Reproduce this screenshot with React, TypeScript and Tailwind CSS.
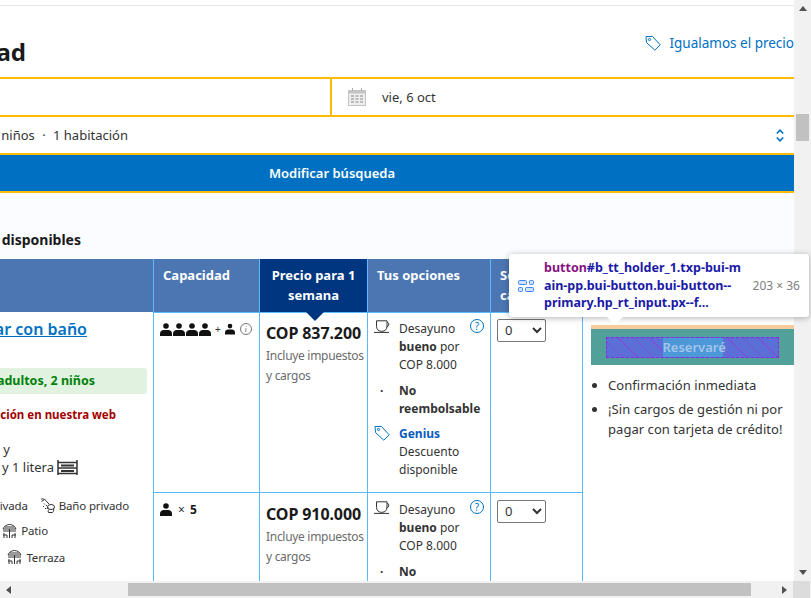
import React, { FC } from 'react';

const Person: FC<{ className?: string }> = ({ className = 'w-[12px] h-[13px]' }) => (
  <svg viewBox="0 0 12 13" className={className} fill="#111">
    <circle cx="6" cy="3" r="2.8" />
    <path d="M0 13V10.5C0 8.2 2 7 3.5 7h5C10 7 12 8.2 12 10.5V13z" />
  </svg>
);

const Cup = () => (
  <svg viewBox="0 0 16 13" className="w-[16px] h-[13px] shrink-0" fill="none" stroke="#333" strokeWidth="1">
    <path d="M2.5 .8h10.5v5.5c0 3-2 5-5 5H7.500c-3 0-5-2-5-5z" />
    <path d="M13 2.500c2.500-.500 2.500 4-.500 4.500" />
    <path d="M0 12.400h15" />
  </svg>
);

const TagIcon: FC<{ className?: string; color?: string }> = ({ className = 'w-[16px] h-[16px]', color = '#0071c2' }) => (
  <svg viewBox="0 0 16 16" className={className} fill="none" stroke={color} strokeWidth="1">
    <path d="M1 1.500 7.500 1.500 15.200 9.800 9.800 15.200 1.500 7.500z" strokeLinejoin="round" />
    <circle cx="4.500" cy="4.500" r="1.100" />
  </svg>
);

const Help = () => (
  <div className="w-[14px] h-[14px] rounded-full border border-[#0071c2] text-[#0071c2] text-[10px] leading-[12px] text-center">?</div>
);

const Calendar = () => (
  <svg viewBox="0 0 18 18" className="w-[18px] h-[18px]" fill="#c4c4c4">
    <path d="M0 2h18v16H0z" />
    <path d="M1 5.500h16V17H1z" fill="#eee" />
    <path d="M3 7h3v2H3zM7.500 7h3v2h-3zM12 7h3v2h-3zM3 10h3v2H3zM7.500 10h3v2h-3zM12 10h3v2h-3zM3 13h3v2H3zM7.500 13h3v2h-3zM12 13h3v2h-3z" fill="#bbb" />
    <path d="M4 0h1v3H4zM13 0h1v3h-1z" fill="#aaa" />
  </svg>
);

const Bunk = () => (
  <svg viewBox="0 0 21 15" className="w-[21px] h-[15px]" fill="none" stroke="#333" strokeWidth="1.500">
    <path d="M1 0v15M20 0v15M1 2.500h19M1 8h19M1 13.500h19" />
    <path d="M4 5.500h13M4 11h13" strokeWidth="2" />
  </svg>
);

const Shower = () => (
  <svg viewBox="0 0 14 15" className="w-[14px] h-[15px]" fill="none" stroke="#333" strokeWidth="1">
    <path d="M0 1c3-.500 5 1 6 3M3 2 .5 3.500M6 4l2 2" />
    <path d="M5 7l1 1M3 5.500l1 1M2 8l1 1M4 10l1 1M7 9l-1 2" />
    <ellipse cx="10" cy="9" rx="3.500" ry="2.500" />
    <path d="M8 11.500c-1 1-1 2-.500 3h4c1-1 1.500-2 1-4" />
  </svg>
);

const Patio = () => (
  <svg viewBox="0 0 15 14" className="w-[15px] h-[14px]" fill="none" stroke="#333" strokeWidth="1">
    <path d="M1 5C2 2 5 .5 7.500 .5S13 2 14 5zM3 3h9M1 7h13M7.500 5v9" />
    <path d="M2 9v5M1 11h4v3M13 9v5M14 11h-4v3" />
  </svg>
);

const Arrow: FC<{ className: string }> = ({ className }) => <span className={`w-0 h-0 ${className}`} />;

const Th: FC<{ className?: string; children?: React.ReactNode }> = ({ className = '', children }) => (
  <th className={`border-x border-[#5bbaff] bg-[#4c76b2] text-white text-left align-top text-[13px] leading-[20px] font-bold pt-[6px] pl-[9px] pr-[6px] ${className}`}>
    {children}
  </th>
);

const Options: FC<{ genius?: boolean }> = ({ genius }) => (
  <div className="flex flex-col text-[12px] leading-[18px] text-[#333] pl-[6px] pr-[6px] pt-[7px]">
    <div className="flex">
      <div className="w-[25px] shrink-0"><Cup /></div>
      <div className="flex-1">Desayuno <b>bueno</b> por COP 8.000</div>
      <div className="shrink-0 -mt-[1px]"><Help /></div>
    </div>
    <div className="flex mt-[8px]">
      <div className="w-[25px] shrink-0 pl-[6px] font-bold">·</div>
      <div className="font-bold">No reembolsable</div>
    </div>
    {genius && (
      <div className="flex mt-[7px]">
        <div className="w-[25px] shrink-0"><TagIcon /></div>
        <div>
          <div className="font-bold text-[#0c5cc0]">Genius</div>
          <div>Descuento disponible</div>
        </div>
      </div>
    )}
  </div>
);

const Price: FC<{ value: string }> = ({ value }) => (
  <div className="pl-[6px] pt-[8px]">
    <div className="text-[16px] leading-[24px] font-bold text-[#1a1a1a] whitespace-nowrap tracking-[-0.1px]">{value}</div>
    <div className="text-[12px] leading-[20px] text-[#6b6b6b] mt-[1px] tracking-[-0.3px] whitespace-nowrap">
      Incluye impuestos
      <br />y cargos
    </div>
  </div>
);

const Qty = () => (
  <select className="w-[49px] h-[23px] bg-white border border-[#767676] rounded-[2px] text-[13px] text-[#333] pl-[3px] mt-[6px] ml-[6px]" defaultValue="0">
    <option value="0">0</option>
  </select>
);

export default function App() {
  return (
    <div className="relative w-[811px] h-[598px] flex flex-col overflow-hidden bg-white font-['Noto_Sans',sans-serif] text-[#333]">
      <div className="flex flex-1 min-h-0">
        <div className="w-[794px] overflow-hidden">
          <div className="w-[924px] -ml-[130px]">
            <div className="h-[6px] border-b border-[#e6e6e6]" />

            <div className="h-[71px] flex justify-between">
              <div className="w-[156px] flex justify-end pt-[29px]">
                <h1 className="text-[24px] leading-[34px] font-bold text-[#1a1a1a] whitespace-nowrap">Disponibilidad</h1>
              </div>
              <div className="flex items-center gap-[8px] h-[20px] mt-[27px] text-[13.500px] text-[#0071c2] whitespace-nowrap">
                <TagIcon />
                Igualamos el precio
              </div>
            </div>

            <div className="border-y-2 border-[#febb02] flex h-[40px]">
              <div className="w-[462px] border-r-2 border-[#febb02]" />
              <div className="flex items-center pl-[16px] text-[13px]">
                <Calendar />
                <span className="ml-[16px] pt-px">vie, 6 oct</span>
              </div>
            </div>
            <div className="h-[36px] flex items-center justify-between text-[13px]">
              <div className="w-[258px] flex justify-end whitespace-nowrap pt-px">
                <span>
                  2 adultos<span className="mx-[4px]"> · </span>2 niños<span className="mx-[4px]"> · </span>1 habitación
                </span>
              </div>
              <svg viewBox="0 0 8 13" className="w-[8px] h-[13px] mr-[10px]" fill="none" stroke="#0071c2" strokeWidth="1.600">
                <path d="M.8 4.500 4 1.200 7.200 4.500M.8 8.500 4 11.800 7.200 8.500" />
              </svg>
            </div>
            <div className="border-y-2 border-[#febb02]">
              <div className="h-[36px] bg-[#0071c2] text-white text-[13px] font-semibold flex items-center justify-center pt-px">Modificar búsqueda</div>
            </div>

            <div className="bg-[#fbfcff] h-[66px] pt-[37px]">
              <div className="w-[211px] flex justify-end">
                <h2 className="text-[14px] leading-[20px] font-bold text-[#1a1a1a] whitespace-nowrap">Habitaciones disponibles</h2>
              </div>
            </div>

            <table className="table-fixed border-collapse w-[924px]">
              <colgroup>
                <col className="w-[283px]" />
                <col className="w-[106px]" />
                <col className="w-[108px]" />
                <col className="w-[123px]" />
                <col className="w-[92px]" />
                <col className="w-[212px]" />
              </colgroup>
              <thead>
                <tr className="h-[53px]">
                  <Th>
                    <span className="block -ml-[20px] whitespace-nowrap">Tipo de alojamiento</span>
                  </Th>
                  <Th>Capacidad</Th>
                  <th className="relative border-x border-[#5bbaff] bg-[#003580] text-white text-center align-top text-[13px] leading-[20px] font-bold pt-[6px] px-[6px]">
                    Precio para 1 semana
                    <Arrow className="absolute left-[46px] -bottom-[9px] border-x-[9px] border-x-transparent border-t-[9px] border-t-[#003580]" />
                  </th>
                  <Th>Tus opciones</Th>
                  <Th>Selecciona cantidad</Th>
                  <Th />
                </tr>
              </thead>
              <tbody className="bg-white">
                <tr className="h-[180px]">
                  <td rowSpan={2} className="border-x border-[#5bbaff] align-top">
                    <div className="flex flex-col items-end whitespace-nowrap text-[11.500px] tracking-[-0.15px]">
                      <a className="mt-[6px] mr-[66px] text-[16px] leading-[22px] font-semibold text-[#0071c2] underline tracking-normal">Habitación familiar con baño</a>
                      <div className="mt-[28px] mr-[6px] h-[26px] w-[270px] rounded-[3px] bg-[#e1f3e0] text-[12.500px] leading-[26px] font-bold text-[#008009] pr-[52px] flex justify-end tracking-normal">
                        Para 2 adultos, 2 niños
                      </div>
                      <div className="mt-[12px] mr-[37px] text-[11.500px] leading-[18px] font-bold text-[#a30000] tracking-normal">Mejor ubicación en nuestra web</div>
                      <div className="mt-[16px] mr-[143px] text-[13px] leading-[18px] tracking-normal">1 cama y</div>
                      <div className="mr-[75px] text-[13px] leading-[18px] flex items-center gap-[3px] tracking-normal">1 sofá cama y 1 litera <Bunk /></div>
                      <div className="mt-[21px] mr-[24px] flex items-center">
                        <span className="mr-[13px]">Cocina privada</span>
                        <Shower />
                        <span className="ml-[4px]">Baño privado</span>
                      </div>
                      <div className="mt-[8px] mr-[105px] flex items-center gap-[4px]"><Patio /> Patio</div>
                      <div className="mt-[9px] mr-[88px] flex items-center gap-[4px]"><Patio /> Terraza</div>
                    </div>
                  </td>
                  <td className="border border-[#5bbaff] align-top pt-[10px] pl-[6px]">
                    <div className="flex items-center">
                      <Person /><Person className="w-[12px] h-[13px] ml-[1px]" /><Person className="w-[12px] h-[13px] ml-[1px]" /><Person className="w-[12px] h-[13px] ml-[1px]" />
                      <span className="text-[10px] mx-[4px] leading-[13px]">+</span>
                      <Person className="w-[10px] h-[12px]" />
                      <span className="ml-[5px] w-[12px] h-[12px] rounded-full border border-[#777] text-[#777] text-[9px] leading-[10px] text-center italic font-['Liberation_Serif',serif]">i</span>
                    </div>
                  </td>
                  <td className="border border-[#5bbaff] align-top"><Price value="COP 837.200" /></td>
                  <td className="border border-[#5bbaff] align-top"><Options genius /></td>
                  <td className="border border-[#5bbaff] align-top"><Qty /></td>
                  <td rowSpan={2} className="border-x border-[#5bbaff] align-top pl-[8px] pt-[13px]">
                    <div className="h-[4px] bg-[#f8cb9c]" />
                    <div className="h-[36px] bg-[#52a09a] flex items-center justify-center">
                      <div className="w-[173px] h-[21px] border border-dashed border-[#8a2be2] bg-[#5b6fd6] bg-[repeating-linear-gradient(45deg,#5b6fd6_0,#5b6fd6_10px,#7a52d8_10px,#7a52d8_11px)] flex justify-center">
                        <span className="h-full w-[60px] bg-[#4d98d8] text-[#a4c4ea] text-[13px] leading-[19px] font-semibold text-center">Reservaré</span>
                      </div>
                    </div>
                    <ul className="list-disc pl-[17px] mt-[10px] text-[13px] leading-[20px] text-[#333] tracking-[0.05px]">
                      <li>Confirmación inmediata</li>
                      <li className="mt-[4px]">¡Sin cargos de gestión ni por pagar con tarjeta de crédito!</li>
                    </ul>
                  </td>
                </tr>
                <tr className="align-top h-[200px]">
                  <td className="border-x border-[#5bbaff] pt-[10px] pl-[6px]">
                    <div className="flex items-center text-[12px] leading-[13px]">
                      <Person />
                      <span className="ml-[6px] text-[#333]">×</span>
                      <span className="ml-[5px] font-bold text-[#1a1a1a]">5</span>
                    </div>
                  </td>
                  <td className="border-x border-[#5bbaff] pt-px"><Price value="COP 910.000" /></td>
                  <td className="border-x border-[#5bbaff] pt-px"><Options /></td>
                  <td className="border-x border-[#5bbaff] pt-px"><Qty /></td>
                </tr>
              </tbody>
            </table>
          </div>
        </div>

        {/* vertical scrollbar */}
        <div className="w-[17px] bg-[#f1f1f1] flex flex-col items-center">
          <Arrow className="mt-[6px] border-x-[4px] border-x-transparent border-b-[5px] border-b-[#505050]" />
          <div className="w-[13px] h-[27px] bg-[#c1c1c1] mt-[103px]" />
          <Arrow className="mt-auto mb-[6px] border-x-[4px] border-x-transparent border-t-[5px] border-t-[#505050]" />
        </div>
      </div>

      {/* horizontal scrollbar */}
      <div className="h-[17px] bg-[#f1f1f1] flex items-center shrink-0">
        <Arrow className="ml-[6px] border-y-[4px] border-y-transparent border-r-[5px] border-r-[#505050]" />
        <div className="h-[13px] w-[623px] bg-[#c1c1c1] ml-[117px]" />
        <Arrow className="ml-[31px] border-y-[4px] border-y-transparent border-l-[5px] border-l-[#505050]" />
        <div className="ml-[6px] h-full w-[17px] bg-[#dcdcdc]" />
      </div>

      {/* devtools inspect tooltip */}
      <div className="absolute left-[509px] top-[254px] w-[300px] h-[63px] bg-white rounded-[3px] shadow-[0_1px_6px_rgba(0,0,0,0.3)] flex items-center pl-[9px] pr-[9px]">
        <svg viewBox="0 0 16 12" className="w-[16px] h-[12px] shrink-0" fill="#cfe2ff" stroke="#3b82f6" strokeWidth="1">
          <rect x=".5" y=".5" width="8" height="4" rx="1" />
          <rect x="11.500" y=".5" width="4" height="4" rx="1" />
          <rect x=".5" y="7.500" width="4" height="4" rx="1" />
          <rect x="7.500" y="7.500" width="8" height="4" rx="1" />
        </svg>
        <div className="ml-[10px] text-[12.500px] leading-[17.500px] font-bold text-[#1a1aa6] whitespace-nowrap">
          <div><span className="text-[#881280]">button</span>#b_tt_holder_1.txp-bui-m</div>
          <div>ain-pp.bui-button.bui-button--</div>
          <div>primary.hp_rt_input.px--f...</div>
        </div>
        <div className="ml-auto text-[12px] text-[#808080] whitespace-nowrap">203 × 36</div>
        <Arrow className="absolute left-[98px] -bottom-[8px] border-x-[8px] border-x-transparent border-t-[8px] border-t-white" />
      </div>
    </div>
  );
}
